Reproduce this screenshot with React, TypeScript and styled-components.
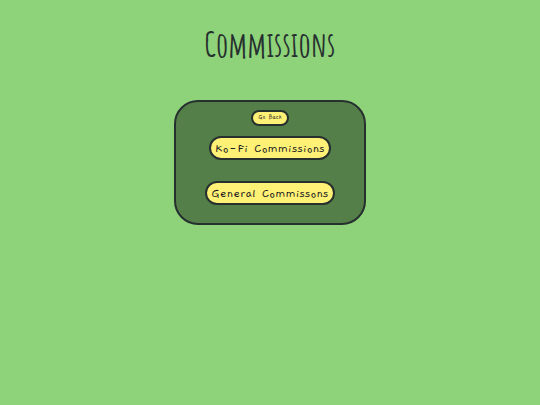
import React from "react";
import styled, { createGlobalStyle } from "styled-components";

const GlobalStyle = createGlobalStyle`
  * { box-sizing: border-box; }
  body {
    margin: 0;
    background: #8ed37a;
    color: #26302f;
  }
`;

const Page = styled.main`
  display: flex;
  flex-direction: column;
  align-items: center;
  padding: 20px 16px;
`;

const Title = styled.h1`
  margin: 0 0 32px;
  font-family: "Amatic SC", "Open Sans", sans-serif;
  font-size: 34px;
  font-weight: 700;
  line-height: 48px;
`;

const Panel = styled.nav`
  display: flex;
  flex-direction: column;
  align-items: center;
  width: 100%;
  max-width: 192px;
  padding: 8px 16px 18px;
  border: 2px solid #26302f;
  border-radius: 24px;
  background: #557f48;
`;

const PillButton = styled.button<{ $small?: boolean }>`
  margin-bottom: ${(p) => (p.$small ? 10 : 21)}px;
  padding: 0 ${(p) => (p.$small ? 5 : 4)}px;
  border: 2px solid #26302f;
  border-radius: 12px;
  background: #fff176;
  color: #1c1c22;
  font-family: "Gaegu", "Lato", cursive;
  font-size: ${(p) => (p.$small ? 7 : 14)}px;
  font-weight: 400;
  line-height: ${(p) => (p.$small ? 12 : 20)}px;
  white-space: nowrap;
  cursor: pointer;
  &:last-child { margin-bottom: 0; }
`;

export default function App() {
  return (
    <Page>
      <GlobalStyle />
      <Title>Commissions</Title>
      <Panel aria-label="Commissions">
        <PillButton $small>Go Back</PillButton>
        <PillButton>Ko-Fi Commissions</PillButton>
        <PillButton>General Commissons</PillButton>
      </Panel>
    </Page>
  );
}
